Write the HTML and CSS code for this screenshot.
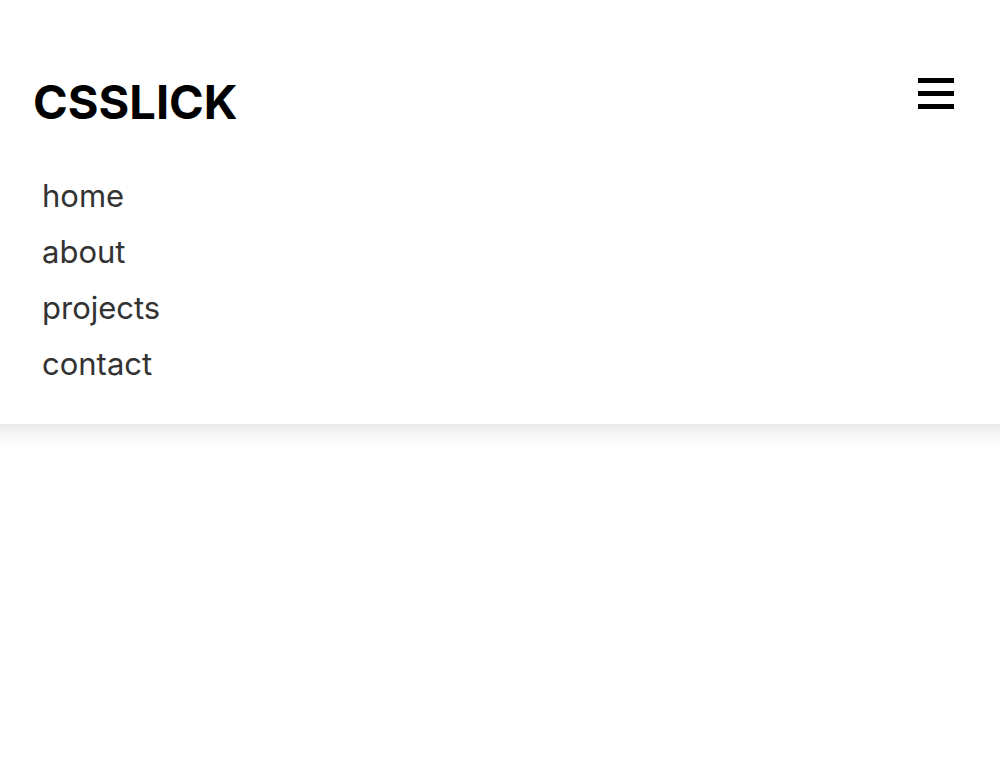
FILE: index.html
```html
<!DOCTYPE html>
<html lang="en">
<head>
<meta charset="utf-8">
<title>CSSLICK</title>
<link rel="stylesheet" href="styles.css">
</head>
<body>
<header class="site-header">
  <div class="top-bar">
    <a class="logo" href="#">CSSLICK</a>
    <button class="menu-toggle" aria-label="Menu">
      <span class="bar"></span><span class="bar"></span><span class="bar"></span>
    </button>
  </div>
  <nav class="nav">
    <a href="#">home</a>
    <a href="#">about</a>
    <a href="#">projects</a>
    <a href="#">contact</a>
  </nav>
</header>
<div class="header-shadow"></div>
</body>
</html>
```
FILE: styles.css
```css
* { box-sizing: border-box; }
html, body { margin: 0; padding: 0; background: #fff; }
body { font-family: Inter, "Noto Sans", sans-serif; }
.site-header {
  background: #fff;
  height: 424px;
  padding: 74px 46px 0 33px;
}
.header-shadow {
  height: 26px;
  background: linear-gradient(to bottom, rgba(0,0,0,0.085) 0%, rgba(0,0,0,0.04) 35%, rgba(0,0,0,0.012) 70%, rgba(0,0,0,0) 100%);
}
.top-bar {
  display: flex;
  justify-content: space-between;
  align-items: flex-start;
}
.logo {
  font-size: 47px;
  font-weight: 700;
  color: #000;
  text-decoration: none;
  letter-spacing: 0;
  line-height: 56px;
}
.menu-toggle {
  background: none;
  border: 0;
  padding: 0;
  margin-top: 4px;
  display: flex;
  flex-direction: column;
  gap: 8px;
  width: 36px;
}
.bar { display: block; width: 36px; height: 5px; background: #000; }
.nav {
  display: flex;
  flex-direction: column;
  padding-left: 9px;
  margin-top: 38px;
}
.nav a {
  color: #333;
  text-decoration: none;
  font-size: 31px;
  line-height: 56px;
}
```
